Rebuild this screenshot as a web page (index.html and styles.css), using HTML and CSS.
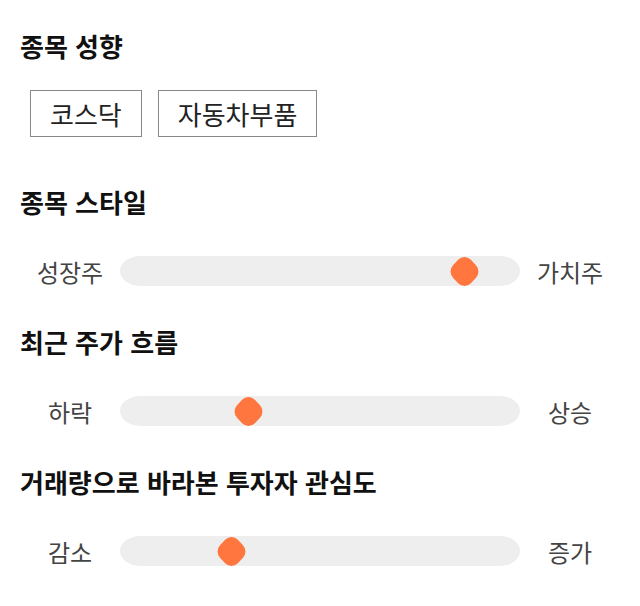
FILE: index.html
```html
<!DOCTYPE html>
<html lang="ko">
  <head>
    <meta charset="UTF-8" />
    <meta name="viewport" content="width=device-width, initial-scale=1.0" />
    <title>종목 성향</title>
    <link rel="stylesheet" href="styles.css">
  </head>
  <body>
    <div class="profile">
      <section class="group group-tags">
        <h2 class="group-title">종목 성향</h2>
        <div class="tags">
          <span class="tag">코스닥</span>
          <span class="tag">자동차부품</span>
        </div>
      </section>

      <section class="group">
        <h2 class="group-title">종목 스타일</h2>
        <div class="scale">
          <span class="scale-label">성장주</span>
          <div class="track">
            <span class="thumb" style="left: 86%"></span>
          </div>
          <span class="scale-label">가치주</span>
        </div>
      </section>

      <section class="group">
        <h2 class="group-title">최근 주가 흐름</h2>
        <div class="scale">
          <span class="scale-label">하락</span>
          <div class="track">
            <span class="thumb" style="left: 32%"></span>
          </div>
          <span class="scale-label">상승</span>
        </div>
      </section>

      <section class="group">
        <h2 class="group-title">거래량으로 바라본 투자자 관심도</h2>
        <div class="scale">
          <span class="scale-label">감소</span>
          <div class="track">
            <span class="thumb" style="left: 27.8%"></span>
          </div>
          <span class="scale-label">증가</span>
        </div>
      </section>
    </div>
  </body>
</html>
```

FILE: styles.css
```css
body {
  margin: 0;
  padding: 0;
  background-color: #fff;
  font-family: "Noto Sans CJK KR", "Noto Sans", sans-serif;
  color: #222;
}
.profile {
  padding: 30px 20px 0;
}
.group {
  margin-bottom: 35px;
}
.group-tags {
  margin-bottom: 49px;
}
.group-title {
  margin: 0 0 33px;
  font-size: 26px;
  line-height: 32px;
  font-weight: 700;
  color: #111;
}
.group-tags .group-title {
  margin-bottom: 28px;
}
.tags {
  display: flex;
  gap: 16px;
  padding-left: 10px;
}
.tag {
  display: inline-block;
  height: 45px;
  line-height: 45px;
  padding: 0 19px;
  border: 1px solid #888;
  font-size: 26px;
  color: #222;
}
.scale {
  display: flex;
  align-items: center;
  height: 40px;
}
.scale-label {
  width: 100px;
  text-align: center;
  font-size: 24px;
  color: #444;
}
.track {
  position: relative;
  flex: 1;
  height: 30px;
  background-color: #eee;
  border-radius: 20px / 15px;
}
.thumb {
  position: absolute;
  top: 50%;
  width: 25px;
  height: 25px;
  margin: -12.5px 0 0 -12.5px;
  background-color: #ff763f;
  border-radius: 9px;
  transform: scaleY(1.04) rotate(45deg);
}
```
